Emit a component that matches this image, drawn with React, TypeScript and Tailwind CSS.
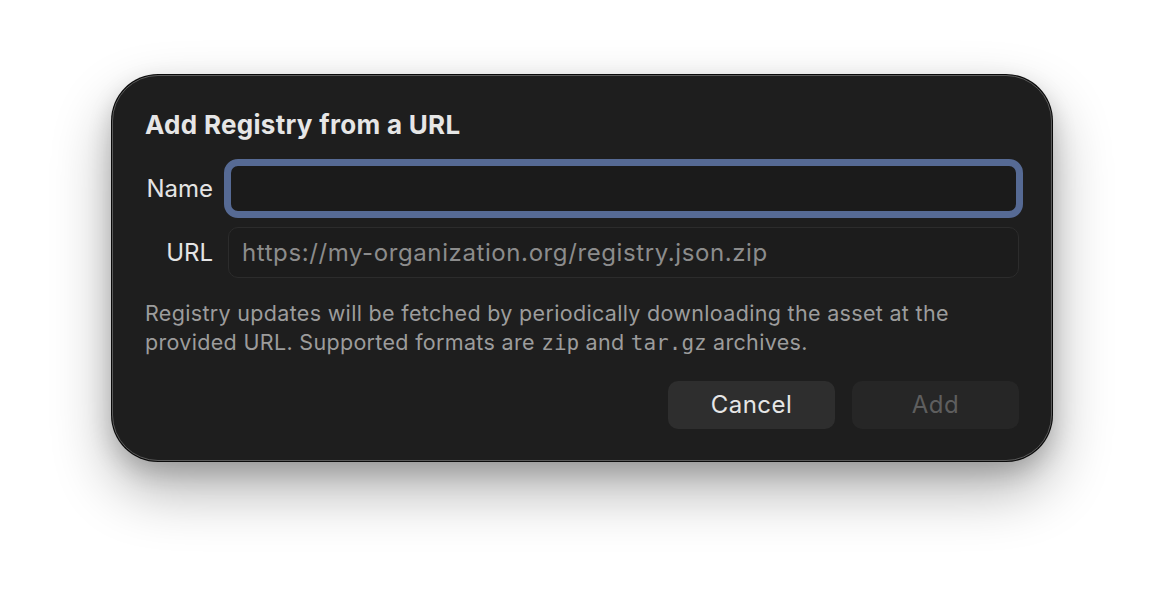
import React from 'react';

// Hoja "Add Registry from a URL": nombre + URL, texto de ayuda y los dos botones.
export default function App() {
  return (
    <div
      className="flex min-h-[608px] w-full justify-center bg-white pt-[75px]"
      style={{ fontFamily: 'Inter, "Noto Sans", sans-serif' }}
    >
      <div className="h-[386px] w-[940px] rounded-[46px] border border-[#5a5a5a] bg-[#1e1e1e] px-[32px] pt-[32px] shadow-[0_0_0_1px_#0a0a0a,0_28px_60px_rgba(0,0,0,0.32),0_10px_24px_rgba(0,0,0,0.18)]">
        <h2 className="text-[26px] font-bold leading-[34px] tracking-[0.3px] text-[#e6e6e6]">
          Add Registry from a URL
        </h2>

        <div className="mt-[17px] flex items-center gap-[15px]">
          <span className="w-[68px] text-right text-[24px] text-[#e4e4e4]">Name</span>
          <div className="h-[59px] flex-1 rounded-[14px] border-[7px] border-[#566a94] bg-[#1b1b1b] -mx-[4px]" />
        </div>

        <div className="mt-[9px] flex items-center gap-[15px]">
          <span className="w-[68px] text-right text-[24px] text-[#e4e4e4]">URL</span>
          <div className="flex h-[51px] flex-1 items-center rounded-[10px] border border-[#2c2c2c] bg-[#1c1c1c] px-[13px] text-[24px] tracking-[0.6px] text-[#8c8c8c]">
            https://my-organization.org/registry.json.zip
          </div>
        </div>

        <p className="mt-[21px] text-[21.5px] leading-[29px] tracking-[0.32px] text-[#9c9c9c]">
          Registry updates will be fetched by periodically downloading the asset at the provided URL. Supported
          formats are{' '}
          <code style={{ fontFamily: '"DejaVu Sans Mono", monospace' }} className="text-[21px] leading-[20px] tracking-normal">
            zip
          </code>{' '}
          and{' '}
          <code style={{ fontFamily: '"DejaVu Sans Mono", monospace' }} className="text-[21px] leading-[20px] tracking-normal">
            tar.gz
          </code>{' '}
          archives.
        </p>

        <div className="mt-[24px] flex justify-end gap-[17px]">
          <button className="h-[48px] w-[167px] rounded-[10px] bg-[#2e2e2e] text-[24px] tracking-[0.5px] text-[#e6e6e6]">
            Cancel
          </button>
          <button className="h-[48px] w-[167px] rounded-[10px] bg-[#262626] text-[24px] tracking-[0.5px] text-[#5e5e5e]">
            Add
          </button>
        </div>
      </div>
    </div>
  );
}
